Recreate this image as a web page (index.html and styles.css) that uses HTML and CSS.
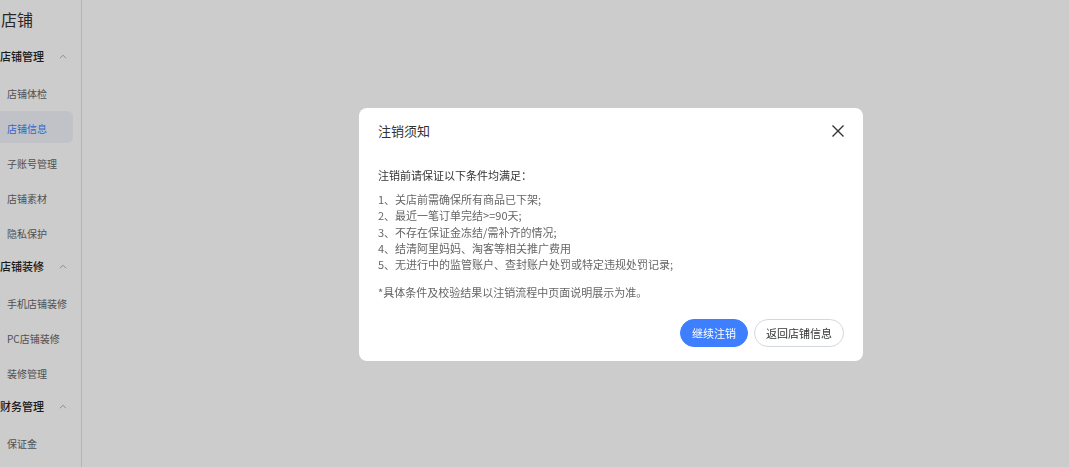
FILE: index.html
```html
<!DOCTYPE html>
<html lang="zh-CN">
<head>
<meta charset="utf-8">
<title>店铺</title>
<link rel="stylesheet" href="styles.css">
</head>
<body>
<div class="page">
  <aside class="sidebar">
    <div class="side-title">店铺</div>
    <div class="group-head"><span>店铺管理</span><svg class="chev" viewBox="0 0 8 5" width="8" height="5"><path d="M1 4.2 L4 1.2 L7 4.2" fill="none" stroke="#b0b0b0" stroke-width="1"/></svg></div>
    <div class="item">店铺体检</div>
    <div class="item active">店铺信息</div>
    <div class="item">子账号管理</div>
    <div class="item">店铺素材</div>
    <div class="item">隐私保护</div>
    <div class="group-head"><span>店铺装修</span><svg class="chev" viewBox="0 0 8 5" width="8" height="5"><path d="M1 4.2 L4 1.2 L7 4.2" fill="none" stroke="#b0b0b0" stroke-width="1"/></svg></div>
    <div class="item">手机店铺装修</div>
    <div class="item">PC店铺装修</div>
    <div class="item">装修管理</div>
    <div class="group-head"><span>财务管理</span><svg class="chev" viewBox="0 0 8 5" width="8" height="5"><path d="M1 4.2 L4 1.2 L7 4.2" fill="none" stroke="#b0b0b0" stroke-width="1"/></svg></div>
    <div class="item">保证金</div>
  </aside>
  <main class="content"></main>
</div>
<div class="mask"></div>
<div class="modal">
  <div class="modal-head">
    <div class="modal-title">注销须知</div>
    <svg class="close" viewBox="0 0 14 14" width="14" height="14"><path d="M1.5 1.5 L12.5 12.5 M12.5 1.5 L1.5 12.5" stroke="#333" stroke-width="1.4" fill="none"/></svg>
  </div>
  <div class="modal-body">
    <p class="lead">注销前请保证以下条件均满足：</p>
    <ul class="rules">
      <li>1、关店前需确保所有商品已下架;</li>
      <li>2、最近一笔订单完结&gt;=90天;</li>
      <li>3、不存在保证金冻结/需补齐的情况;</li>
      <li>4、结清阿里妈妈、淘客等相关推广费用</li>
      <li>5、无进行中的监管账户、查封账户处罚或特定违规处罚记录;</li>
    </ul>
    <p class="note">*具体条件及校验结果以注销流程中页面说明展示为准。</p>
  </div>
  <div class="modal-foot">
    <button class="btn btn-primary">继续注销</button>
    <button class="btn btn-default">返回店铺信息</button>
  </div>
</div>
</body>
</html>
```
FILE: styles.css
```css
* { box-sizing: border-box; }
html, body { margin: 0; padding: 0; }
body {
  font-family: "Noto Sans CJK SC", "Noto Sans", sans-serif;
  background: #fff;
  width: 1069px;
  height: 467px;
  overflow: hidden;
}
.page {
  display: flex;
  height: 467px;
}
.sidebar {
  width: 82px;
  flex: none;
  border-right: 1px solid #e3e3e3;
  background: #fff;
  padding-top: 7px;
}
.side-title {
  font-size: 16px;
  line-height: 24px;
  color: #333;
  padding-left: 1px;
  margin-bottom: 10px;
}
.group-head {
  display: flex;
  align-items: center;
  height: 30px;
  font-size: 11px;
  font-weight: 500;
  color: #222;
  margin-bottom: 5px;
}
.group-head span { width: 58px; }
.chev { margin-left: 1px; }
.item {
  height: 32px;
  margin-bottom: 3px;
  width: 73px;
  display: flex;
  align-items: center;
  padding-left: 7px;
  padding-top: 3px;
  font-size: 10px;
  color: #666;
  border-radius: 0 6px 6px 0;
}
.item.active {
  background: #f0f3f9;
  color: #3d7fff;
}
.content {
  flex: 1;
  background: #fff;
}
.mask {
  position: fixed;
  inset: 0;
  background: rgba(0, 0, 0, 0.2);
}
.modal {
  position: fixed;
  left: 359px;
  top: 108px;
  width: 504px;
  height: 253px;
  background: #fff;
  border-radius: 8px;
  padding: 0 19px 0 19px;
  display: flex;
  flex-direction: column;
}
.modal-head {
  height: 46px;
  display: flex;
  align-items: center;
  justify-content: space-between;
}
.modal-title {
  font-size: 13px;
  color: #333;
  line-height: 18px;
}
.close { margin-right: -1px; }
.modal-body {
  padding-top: 13px;
  font-size: 11px;
}
.lead {
  margin: 0;
  line-height: 16px;
  color: #333;
}
.rules {
  list-style: none;
  margin: 8px 0 0;
  padding: 0;
  color: #666;
}
.rules li { line-height: 16.25px; }
.note {
  margin: 12px 0 0;
  line-height: 16px;
  color: #666;
}
.modal-foot {
  margin-top: auto;
  padding-bottom: 14px;
  display: flex;
  justify-content: flex-end;
  gap: 6px;
}
.btn {
  height: 28px;
  border-radius: 14px;
  font-family: inherit;
  font-size: 11px;
  padding: 0;
  cursor: pointer;
}
.btn-primary {
  width: 68px;
  background: #3d7fff;
  border: 1px solid #3d7fff;
  color: #fff;
}
.btn-default {
  width: 90px;
  background: #fff;
  border: 1px solid #d3d7de;
  color: #333;
}
```
